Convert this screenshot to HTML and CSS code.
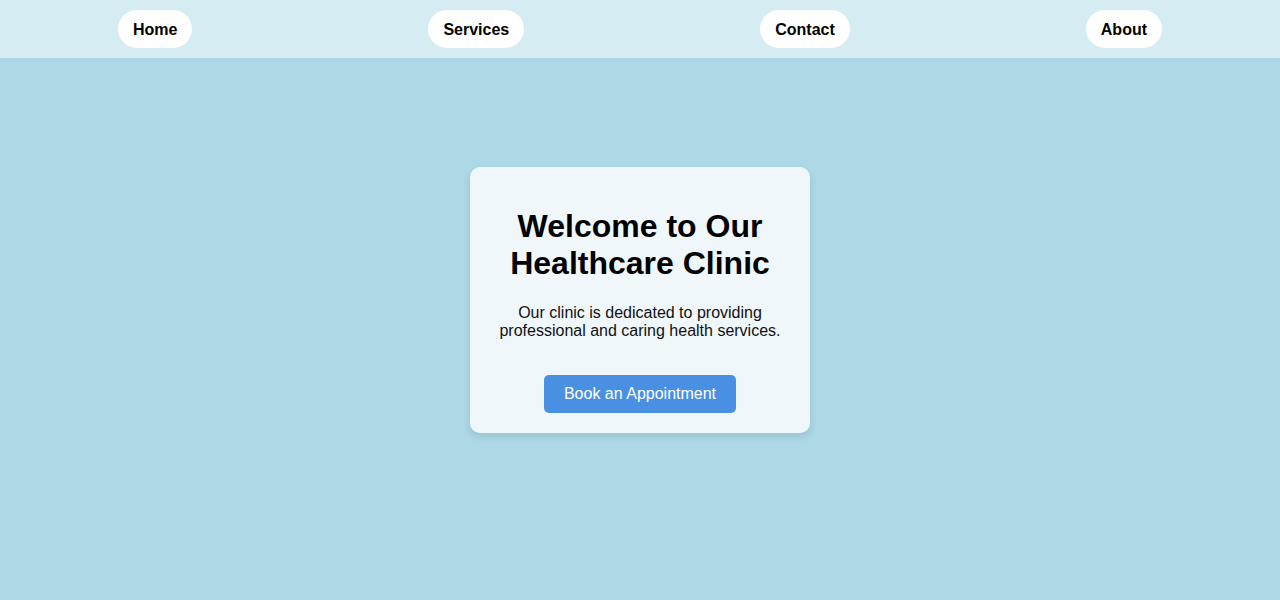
FILE: index.html
```html
<!DOCTYPE html>
<html lang="en">
<head>
<meta charset="utf-8">
<title>Healthcare Clinic</title>
<link rel="stylesheet" href="styles.css">
</head>
<body>
<nav class="nav">
  <a class="nav-link" href="#">Home</a>
  <a class="nav-link" href="#">Services</a>
  <a class="nav-link" href="#">Contact</a>
  <a class="nav-link" href="#">About</a>
</nav>
<main class="main">
  <section class="card">
    <h1 class="title">Welcome to Our Healthcare Clinic</h1>
    <p class="text">Our clinic is dedicated to providing professional and caring health services.</p>
    <a class="btn" href="#">Book an Appointment</a>
  </section>
</main>
</body>
</html>
```
FILE: styles.css
```css
html, body {
  margin: 0;
  padding: 0;
}
body {
  background: #add8e6;
  font-family: "Liberation Sans", Arial, sans-serif;
  min-height: 600px;
}
.nav {
  display: flex;
  justify-content: space-around;
  align-items: center;
  height: 58px;
  background: rgba(255, 255, 255, 0.5);
}
.nav-link {
  display: block;
  background: #fff;
  color: #000;
  font-weight: bold;
  font-size: 16px;
  line-height: 18px;
  padding: 11px 15px 9px;
  border-radius: 20px;
  text-decoration: none;
}
.main {
  display: flex;
  justify-content: center;
  padding-top: 109px;
}
.card {
  width: 300px;
  padding: 20px;
  background: rgba(255, 255, 255, 0.8);
  border-radius: 10px;
  box-shadow: 0 4px 8px rgba(0, 0, 0, 0.1);
  text-align: center;
}
.title {
  font-size: 32px;
  margin: 21.44px 0;
  color: #000;
}
.text {
  font-size: 16px;
  margin: 16px 0;
  color: #111;
}
.btn {
  display: inline-block;
  margin-top: 19px;
  padding: 10px 20px;
  background: #4a90e2;
  color: #fff;
  font-size: 16px;
  line-height: 18px;
  border-radius: 5px;
  text-decoration: none;
}
```
